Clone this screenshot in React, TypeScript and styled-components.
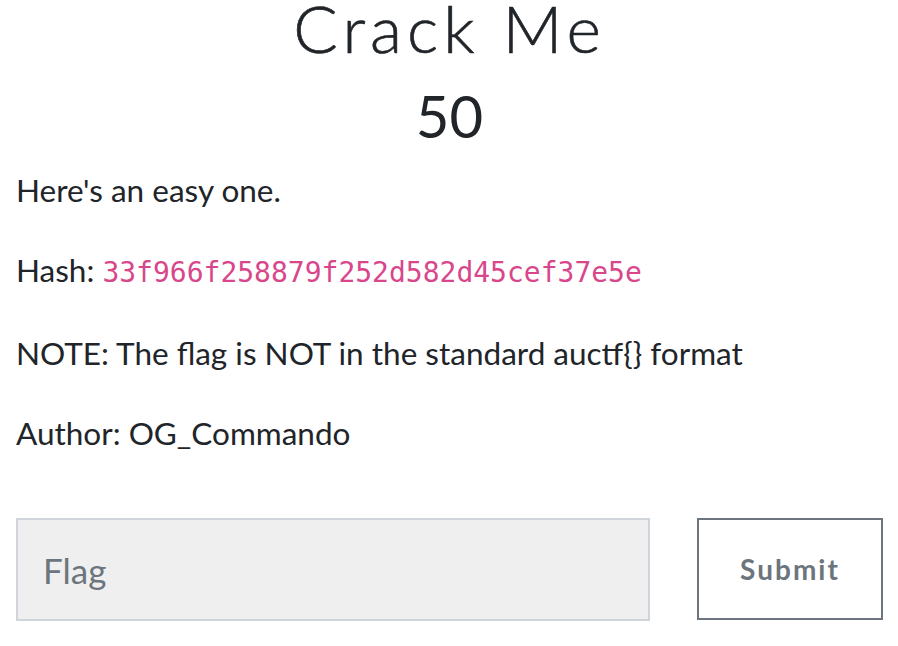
import styled, { createGlobalStyle } from 'styled-components'

const GlobalStyle = createGlobalStyle`
    html, body {
        margin: 0;
        padding: 0;
        background: #ffffff;
    }
    body {
        font-family: Lato, "Liberation Sans", sans-serif;
        color: #212529;
    }
`

const SChallenge = styled.div`
    width: 898px;
    box-sizing: border-box;
    padding: 0 15px 0 16px;
    display: flex;
    flex-direction: column;
`

const STitle = styled.h2`
    margin: 0;
    text-align: center;
    font-family: Lato, "Liberation Sans", sans-serif;
    font-weight: 300;
    font-size: 66px;
    letter-spacing: 5px;
    line-height: 56px;
    color: #212529;
    -webkit-text-stroke: 0.6px #212529;
`

const SValue = styled.h3`
    margin: 28px 0 0;
    text-align: center;
    font-weight: 400;
    font-size: 58px;
    line-height: 64px;
    color: #212529;
`

const SDescription = styled.div`
    margin-top: 20px;
    font-size: 31.5px;
    line-height: 44px;
    p {
        margin: 0 0 36px;
    }
`

const SCode = styled.code`
    font-family: "DejaVu Sans Mono", "Liberation Mono", monospace;
    font-size: 28px;
    color: #d8478b;
`

const SForm = styled.form`
    display: grid;
    grid-template-columns: 1fr 186px;
    column-gap: 47px;
    margin-top: 27px;
`

const SInput = styled.input`
    height: 103px;
    box-sizing: border-box;
    border: 2px solid #d0d5dc;
    background: #efefef;
    padding: 0 25px;
    font-family: Lato, "Liberation Sans", sans-serif;
    font-size: 35px;
    color: #495057;
    outline: none;
    &::placeholder {
        color: #6c757d;
    }
`

const SSubmit = styled.button`
    height: 102px;
    box-sizing: border-box;
    border: 2px solid #6c757d;
    background: #ffffff;
    color: #6c757d;
    font-family: Lato, "Liberation Sans", sans-serif;
    font-weight: 700;
    font-size: 28px;
    letter-spacing: 2px;
`

function App() {
    return (
        <SChallenge>
            <GlobalStyle />
            <STitle>Crack Me</STitle>
            <SValue>50</SValue>
            <SDescription>
                <p>Here's an easy one.</p>
                <p>
                    Hash: <SCode>33f966f258879f252d582d45cef37e5e</SCode>
                </p>
                <p>NOTE: The flag is NOT in the standard auctf{'{}'} format</p>
                <p>Author: OG_Commando</p>
            </SDescription>
            <SForm onSubmit={(e) => e.preventDefault()}>
                <SInput type="text" placeholder="Flag" />
                <SSubmit type="submit">Submit</SSubmit>
            </SForm>
        </SChallenge>
    )
}

export default App
